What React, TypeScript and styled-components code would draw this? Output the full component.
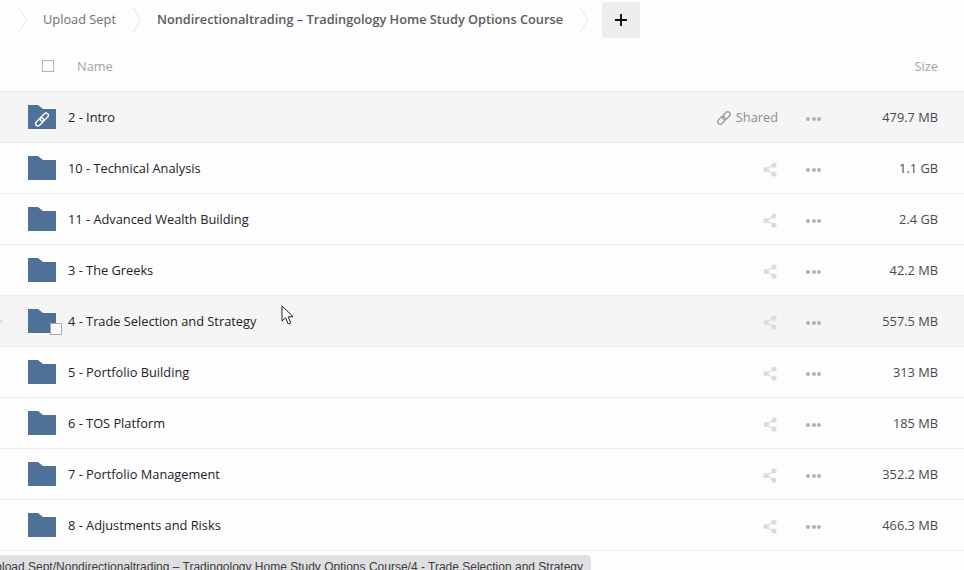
import React, { FC } from 'react';
import styled, { createGlobalStyle } from 'styled-components';

const GlobalStyle = createGlobalStyle`
    html, body {
        margin: 0;
        padding: 0;
        width: 964px;
        height: 570px;
        overflow: hidden;
        background: #fdfdfd;
        font-family: 'Open Sans', 'Liberation Sans', sans-serif;
    }
`;

type Item = { name: string; size: string; shared?: boolean; hover?: boolean; checkbox?: boolean };

const items: Array<Item> = [
    { name: '2 - Intro', size: '479.7 MB', shared: true, hover: true },
    { name: '10 - Technical Analysis', size: '1.1 GB' },
    { name: '11 - Advanced Wealth Building', size: '2.4 GB' },
    { name: '3 - The Greeks', size: '42.2 MB' },
    { name: '4 - Trade Selection and Strategy', size: '557.5 MB', hover: true, checkbox: true },
    { name: '5 - Portfolio Building', size: '313 MB' },
    { name: '6 - TOS Platform', size: '185 MB' },
    { name: '7 - Portfolio Management', size: '352.2 MB' },
    { name: '8 - Adjustments and Risks', size: '466.3 MB' },
];

const Chevron: FC = () => (
    <ChevronSvg width="10" height="26" viewBox="0 0 10 26">
        <path d="M1 .5 L8.5 13 L1 25.5" fill="none" stroke="#e6e6e6" strokeWidth="1" />
    </ChevronSvg>
);

const FolderIcon: FC<{ linked?: boolean }> = ({ linked }) => (
    <svg width="28" height="24" viewBox="0 0 28 24">
        <path d="M0 0 H10 L15 4 H28 V24 H0 Z" fill="#4f7097" />
        {linked && (
            <g fill="none" stroke="#fff" strokeWidth="1.4" transform="rotate(-45 14 14.5)">
                <rect x="6" y="12.2" width="9.5" height="4.6" rx="2.3" />
                <rect x="12.5" y="12.2" width="9.5" height="4.6" rx="2.3" />
            </g>
        )}
    </svg>
);

const LinkIcon: FC = () => (
    <svg width="14" height="14" viewBox="0 0 14 14">
        <g fill="none" stroke="#a0a0a0" strokeWidth="1.5" transform="rotate(-45 7 7)">
            <rect x="-0.7" y="4.5" width="8.7" height="5" rx="2.5" />
            <rect x="6" y="4.5" width="8.7" height="5" rx="2.5" />
        </g>
    </svg>
);

const ShareIcon: FC = () => (
    <svg width="14" height="15" viewBox="0 0 14 15">
        <path d="M11 3 L3 7.5 L11 12" fill="none" stroke="#dcdcdc" strokeWidth="1.4" />
        <circle cx="11" cy="3" r="2.6" fill="#dcdcdc" />
        <circle cx="3" cy="7.5" r="2.6" fill="#dcdcdc" />
        <circle cx="11" cy="12" r="2.6" fill="#dcdcdc" />
    </svg>
);

const Dots: FC = () => (
    <DotsRow>
        <i />
        <i />
        <i />
    </DotsRow>
);

const App: FC = () => (
    <Page>
        <GlobalStyle />
        <Breadcrumb>
            <Chevron />
            <Crumb>Upload Sept</Crumb>
            <Chevron />
            <Crumb $current>Nondirectionaltrading – Tradingology Home Study Options Course</Crumb>
            <Chevron />
            <AddButton>
                <svg width="12" height="12" viewBox="0 0 12 12">
                    <path d="M6 0 V12 M0 6 H12" stroke="#111" strokeWidth="1.9" />
                </svg>
            </AddButton>
        </Breadcrumb>
        <HeaderRow>
            <HeaderCheck />
            <HeaderName>Name</HeaderName>
            <HeaderSize>Size</HeaderSize>
        </HeaderRow>
        <List>
            {items.map(item => (
                <Row key={item.name} $hover={item.hover}>
                    {item.checkbox && <DragHandle />}
                    <FolderCell>
                        <FolderIcon linked={item.shared} />
                        {item.checkbox && <RowCheck />}
                    </FolderCell>
                    <Title>{item.name}</Title>
                    <ShareCell>
                        {item.shared ? (
                            <>
                                <LinkIcon />
                                <SharedLabel>Shared</SharedLabel>
                            </>
                        ) : (
                            <ShareIcon />
                        )}
                    </ShareCell>
                    <DotsCell>
                        <Dots />
                    </DotsCell>
                    <Size>{item.size}</Size>
                </Row>
            ))}
        </List>
        <Cursor width="14" height="21" viewBox="0 0 14 21">
            <path
                d="M1 1 V16 L4.6 12.8 L7.2 19 L9.8 17.9 L7.2 11.9 L12 11.6 Z"
                fill="#fff"
                stroke="#222"
                strokeWidth="1"
            />
        </Cursor>
        <StatusBar>
            <StatusText>Upload Sept/Nondirectionaltrading – Tradingology Home Study Options Course/4 - Trade Selection and Strategy</StatusText>
        </StatusBar>
    </Page>
);

const Page = styled.div`
    position: relative;
    width: 964px;
    height: 570px;
    overflow: hidden;
    background: #fdfdfd;
`;

const Breadcrumb = styled.div`
    display: flex;
    align-items: center;
    height: 38px;
    padding: 2px 0 0 18px;
    box-sizing: border-box;
`;

const ChevronSvg = styled.svg`
    flex: none;
`;

const Crumb = styled.span<{ $current?: boolean }>`
    margin: -2px 16px 0 15px;
    font-size: ${p => (p.$current ? '12.76px' : '12.8px')};
    font-weight: ${p => (p.$current ? 600 : 400)};
    color: ${p => (p.$current ? '#5b5b5f' : '#707070')};
    white-space: nowrap;
`;

const AddButton = styled.div`
    display: flex;
    align-items: center;
    justify-content: center;
    width: 38px;
    height: 36px;
    margin-left: 13px;
    background: #eeeeee;
    border-radius: 2px;
`;

const HeaderRow = styled.div`
    display: flex;
    align-items: center;
    height: 54px;
    padding: 2px 26px 0 42px;
    box-sizing: border-box;
    border-bottom: 1px solid #e9e9e9;
    font-size: 12.8px;
    color: #a3a3a3;
`;

const HeaderCheck = styled.div`
    width: 10px;
    height: 10px;
    border: 1px solid #b4b4b4;
    background: #fff;
`;

const HeaderName = styled.span`
    margin-left: 23px;
    flex: 1;
`;

const HeaderSize = styled.span``;

const List = styled.div`
    display: flex;
    flex-direction: column;
`;

const Row = styled.div<{ $hover?: boolean }>`
    position: relative;
    display: flex;
    align-items: center;
    height: 51px;
    box-sizing: border-box;
    padding: 0 26px 0 28px;
    border-bottom: 1px solid #ececec;
    background: ${p => (p.$hover ? '#f5f5f5' : 'transparent')};
`;

const DragHandle = styled.div`
    position: absolute;
    left: 0;
    top: 24px;
    width: 2px;
    height: 3px;
    background: #dcdcdc;
`;

const FolderCell = styled.div`
    position: relative;
    display: flex;
    width: 28px;
    height: 24px;
    margin-right: 12px;
`;

const RowCheck = styled.div`
    position: absolute;
    right: -6px;
    bottom: -2px;
    width: 10px;
    height: 10px;
    border: 1px solid #a9a9a9;
    background: #fbfbfb;
`;

const Title = styled.span`
    flex: 1;
    font-size: 12.8px;
    color: #222226;
    white-space: nowrap;
`;

const ShareCell = styled.div`
    display: flex;
    align-items: center;
    justify-content: flex-end;
    gap: 5px;
    width: 101px;
    padding-top: 2px;
`;

const SharedLabel = styled.span`
    font-size: 12.8px;
    color: #8d8d8d;
    margin: -2px -1px 0 0;
`;

const DotsCell = styled.div`
    display: flex;
    justify-content: flex-start;
    width: 70px;
    margin-left: 29px;
    padding-top: 3px;
`;

const DotsRow = styled.div`
    display: flex;
    gap: 1.5px;

    i {
        display: block;
        width: 4px;
        height: 4px;
        border-radius: 50%;
        background: #b0b0b0;
    }
`;

const Size = styled.span`
    width: 62px;
    text-align: right;
    font-size: 12.8px;
    color: #4a4a4a;
`;

const Cursor = styled.svg`
    position: absolute;
    left: 281px;
    top: 305px;
`;

const StatusBar = styled.div`
    position: absolute;
    left: 0;
    bottom: -4px;
    width: 591px;
    height: 19px;
    overflow: hidden;
    background: #dfdfe1;
    border-top-right-radius: 5px;
`;

const StatusText = styled.div`
    position: absolute;
    right: 8px;
    top: 5px;
    font-family: 'Liberation Sans', sans-serif;
    font-size: 12px;
    color: #3c3c3c;
    white-space: nowrap;
`;

export default App;
